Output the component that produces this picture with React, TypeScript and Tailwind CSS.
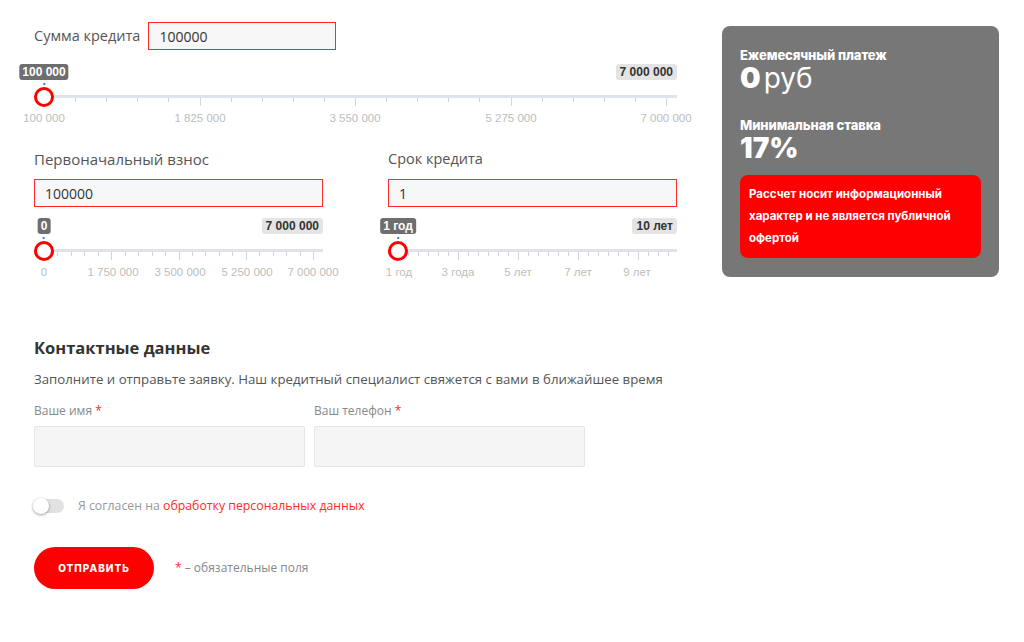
import React from "react";

type Label = { pos: number; text: string };

function Slider({
  width,
  tickStart,
  tickEnd,
  count,
  majorEvery,
  labels,
  minText,
  maxText,
}: {
  width: number;
  tickStart: number;
  tickEnd: number;
  count: number;
  majorEvery: number;
  labels: Label[];
  minText: string;
  maxText: string;
}) {
  const ticks = [];
  for (let i = 0; i <= count; i++) {
    const x = Math.round(tickStart + ((tickEnd - tickStart) * i) / count) + 0.5;
    const major = i % majorEvery === 0;
    ticks.push(
      <line key={i} x1={x} x2={x} y1={3} y2={major ? 11 : 7} stroke="#cfd5dd" strokeWidth={1} />
    );
  }
  return (
    <div className="relative h-[62px] font-['Liberation_Sans',Arial,sans-serif]" style={{ width }}>
      <div className="absolute left-[10px] top-0 -translate-x-1/2 flex flex-col items-center">
        <div className="rounded-[3px] bg-[#6e6e6e] px-[3px] h-[16px] leading-[16px] text-[12px] font-bold text-white whitespace-nowrap">
          {minText}
        </div>
        <div className="mt-[3px] h-[2px] w-[2px] bg-[#3b82f6]" />
      </div>
      <div className="absolute right-0 top-0 rounded-[3px] bg-[#e4e4e4] px-[4px] h-[16px] leading-[16px] text-[12px] font-bold text-[#333] whitespace-nowrap">
        {maxText}
      </div>
      <svg className="absolute left-0 top-[31px]" width={width} height={12}>
        <rect x={0} y={0} width={width} height={3} fill="#dfe4ec" />
        {ticks}
      </svg>
      <div className="absolute left-0 top-[23px] h-[20px] w-[20px] rounded-full border-[3px] border-[#ff0000] bg-white" />
      {labels.map((l) => (
        <div
          key={l.text}
          className="absolute top-[46px] -translate-x-1/2 whitespace-nowrap text-[11.5px] text-[#bdbdbd]"
          style={{ left: l.pos }}
        >
          {l.text}
        </div>
      ))}
    </div>
  );
}

function RedInput({ value, className }: { value: string; className: string }) {
  return (
    <div className={"flex items-center border border-[#ff2a2a] bg-[#f7f7f7] pl-[10px] text-[14px] text-[#333] " + className}>
      {value}
    </div>
  );
}

export default function App() {
  return (
    <div className="w-[1024px] h-[642px] bg-white font-['Open_Sans',sans-serif] overflow-hidden">
      <div className="flex pl-[34px] gap-[45px]">
        {/* Left column */}
        <div className="w-[643px] flex flex-col">
          <div className="mt-[22px] flex items-center">
            <span className="text-[14.5px] text-[#555]">Сумма кредита</span>
            <RedInput value="100000" className="ml-[8px] h-[28px] w-[188px]" />
          </div>
          <div className="mt-[14px]">
            <Slider
              width={643}
              tickStart={10}
              tickEnd={632}
              count={20}
              majorEvery={5}
              minText="100 000"
              maxText="7 000 000"
              labels={[
                { pos: 10, text: "100 000" },
                { pos: 166, text: "1 825 000" },
                { pos: 321, text: "3 550 000" },
                { pos: 477, text: "5 275 000" },
                { pos: 632, text: "7 000 000" },
              ]}
            />
          </div>
          <div className="mt-[23px] flex gap-[65px]">
            <div className="w-[289px] flex flex-col">
              <span className="text-[15px] text-[#555] leading-[20px]">Первоначальный взнос</span>
              <RedInput value="100000" className="mt-[10px] h-[28px] w-[289px]" />
              <div className="mt-[11px]">
                <Slider
                  width={289}
                  tickStart={10}
                  tickEnd={279}
                  count={20}
                  majorEvery={5}
                  minText="0"
                  maxText="7 000 000"
                  labels={[
                    { pos: 10, text: "0" },
                    { pos: 79, text: "1 750 000" },
                    { pos: 146, text: "3 500 000" },
                    { pos: 213, text: "5 250 000" },
                    { pos: 279, text: "7 000 000" },
                  ]}
                />
              </div>
            </div>
            <div className="w-[289px] flex flex-col">
              <span className="text-[14.5px] text-[#555] leading-[20px]">Срок кредита</span>
              <RedInput value="1" className="mt-[10px] h-[28px] w-[289px]" />
              <div className="mt-[11px]">
                <Slider
                  width={289}
                  tickStart={10}
                  tickEnd={280}
                  count={27}
                  majorEvery={6}
                  minText="1 год"
                  maxText="10 лет"
                  labels={[
                    { pos: 11, text: "1 год" },
                    { pos: 70, text: "3 года" },
                    { pos: 130, text: "5 лет" },
                    { pos: 190, text: "7 лет" },
                    { pos: 249, text: "9 лет" },
                  ]}
                />
              </div>
            </div>
          </div>
        </div>

        {/* Right panel */}
        <div className="mt-[26px] w-[277px] h-[251px] rounded-[8px] bg-[#777777] px-[18px] pt-[21px] text-white font-['Inter',sans-serif]">
          <div className="text-[13px] font-extrabold leading-[16px] tracking-[-0.1px]">Ежемесячный платеж</div>
          <div className="flex items-baseline leading-[30px]">
            <span className="text-[29px] font-black">0</span>
            <span className="ml-[3px] text-[28px] font-normal">руб</span>
          </div>
          <div className="mt-[24px] text-[13px] font-extrabold leading-[16px] tracking-[-0.1px]">Минимальная ставка</div>
          <div className="text-[28px] font-black leading-[30px]">17%</div>
          <div className="mt-[12px] w-[241px] rounded-[8px] bg-[#ff0000] pl-[9px] pt-[8px] pb-[9px] text-[11.5px] font-bold leading-[22px]">
            Рассчет носит информационный
            <br />
            характер и не является публичной
            <br />
            офертой
          </div>
        </div>
      </div>

      {/* Contact section */}
      <div className="pl-[34px] mt-[57px] flex flex-col">
        <div className="text-[16.5px] font-bold text-[#333] leading-[22px]">Контактные данные</div>
        <div className="mt-[11px] text-[13.25px] text-[#555] leading-[18px]">
          Заполните и отправьте заявку. Наш кредитный специалист свяжется с вами в ближайшее время
        </div>
        <div className="mt-[15px] flex gap-[9px]">
          <div className="flex flex-col w-[271px]">
            <span className="text-[12px] text-[#888] leading-[16px]">
              Ваше имя <span className="text-[#ff2a2a]">*</span>
            </span>
            <div className="mt-[7px] h-[41px] rounded-[2px] border border-[#e6e6e6] bg-[#f5f5f5]" />
          </div>
          <div className="flex flex-col w-[271px]">
            <span className="text-[12px] text-[#888] leading-[16px]">
              Ваш телефон <span className="text-[#ff2a2a]">*</span>
            </span>
            <div className="mt-[7px] h-[41px] rounded-[2px] border border-[#e6e6e6] bg-[#f5f5f5]" />
          </div>
        </div>
        <div className="mt-[30px] flex items-center">
          <div className="relative h-[14px] w-[30px] rounded-full bg-[#e2e2e2]">
            <div className="absolute -left-[1px] -top-[1px] h-[16px] w-[16px] rounded-full bg-white shadow-[0_1px_3px_rgba(0,0,0,0.4)]" />
          </div>
          <span className="ml-[14px] text-[12.3px] text-[#999]">
            Я согласен на <span className="text-[#ff2a2a]">обработку персональных данных</span>
          </span>
        </div>
        <div className="mt-[32px] flex items-center">
          <div className="flex h-[42px] w-[120px] items-center justify-center rounded-full bg-[#ff0000] text-[10px] font-extrabold tracking-[1px] text-white font-['Inter',sans-serif]">
            ОТПРАВИТЬ
          </div>
          <span className="ml-[21px] text-[12px] text-[#888]">
            <span className="text-[#ff2a2a]">*</span> – обязательные поля
          </span>
        </div>
      </div>
    </div>
  );
}
